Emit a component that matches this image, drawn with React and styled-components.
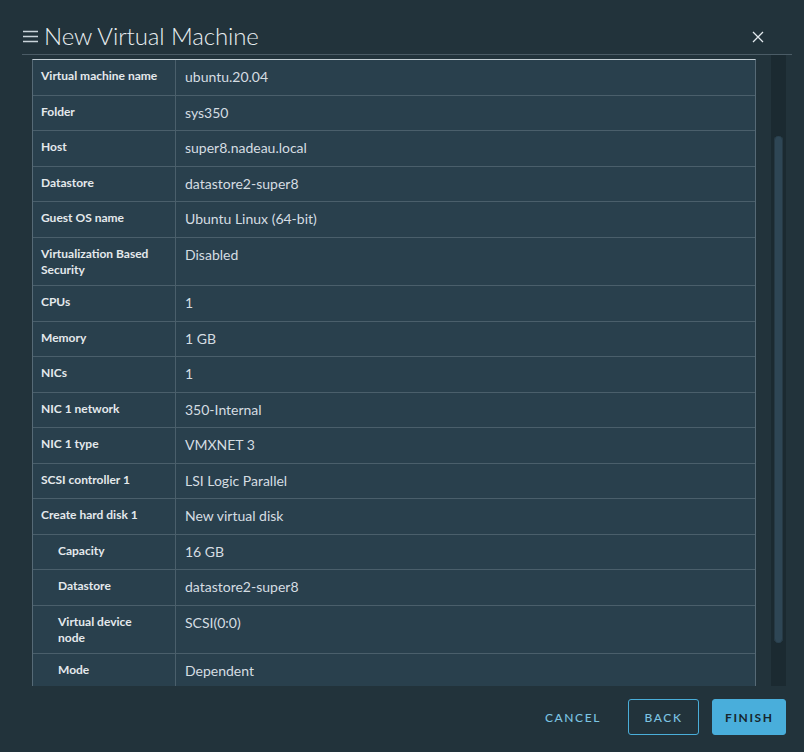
import React from "react";
import styled, { createGlobalStyle } from "styled-components";

const rows = [
    { label: "Virtual machine name", value: "ubuntu.20.04" },
    { label: "Folder", value: "sys350" },
    { label: "Host", value: "super8.nadeau.local" },
    { label: "Datastore", value: "datastore2-super8" },
    { label: "Guest OS name", value: "Ubuntu Linux (64-bit)" },
    { label: "Virtualization Based Security", value: "Disabled" },
    { label: "CPUs", value: "1" },
    { label: "Memory", value: "1 GB" },
    { label: "NICs", value: "1" },
    { label: "NIC 1 network", value: "350-Internal" },
    { label: "NIC 1 type", value: "VMXNET 3" },
    { label: "SCSI controller 1", value: "LSI Logic Parallel" },
    { label: "Create hard disk 1", value: "New virtual disk" },
    { label: "Capacity", value: "16 GB", sub: true },
    { label: "Datastore", value: "datastore2-super8", sub: true },
    { label: "Virtual device node", value: "SCSI(0:0)", sub: true },
    { label: "Mode", value: "Dependent", sub: true },
];

const App = () => {
    return (
        <>
            <GlobalStyle />
            <Dialog>
                <Header>
                    <MenuIcon width="15" height="13" viewBox="0 0 15 13">
                        <path d="M0 1.5h15M0 6.5h15M0 11.5h15" stroke="#c9d4da" strokeWidth="1.4" />
                    </MenuIcon>
                    <Title>New Virtual Machine</Title>
                    <CloseButton>
                        <svg width="12" height="12" viewBox="0 0 12 12">
                            <path d="M1 1l10 10M11 1L1 11" stroke="#e3eaee" strokeWidth="1.3" />
                        </svg>
                    </CloseButton>
                </Header>
                <Divider />
                <Body>
                    <ScrollArea>
                        <Table>
                            {rows.map((row, index) => (
                                <Row key={`row-${index}`}>
                                    <Label sub={row.sub}>{row.label}</Label>
                                    <Value>{row.value}</Value>
                                </Row>
                            ))}
                        </Table>
                    </ScrollArea>
                    <Track>
                        <Thumb />
                    </Track>
                </Body>
                <Footer>
                    <TextButton>Cancel</TextButton>
                    <OutlineButton>Back</OutlineButton>
                    <PrimaryButton>Finish</PrimaryButton>
                </Footer>
            </Dialog>
        </>
    );
};

export default App;

const GlobalStyle = createGlobalStyle`
    html, body {
        margin: 0;
        padding: 0;
        background: #22333b;
    }
    * {
        box-sizing: border-box;
    }
`;

const Dialog = styled.div`
    width: 804px;
    height: 752px;
    background: #22333b;
    font-family: "Lato", "Noto Sans", sans-serif;
    display: flex;
    flex-direction: column;
    overflow: hidden;
`;

const Header = styled.div`
    height: 54px;
    display: flex;
    align-items: center;
    padding: 17px 40px 0 23px;
`;

const MenuIcon = styled.svg`
    margin-right: 6px;
    margin-top: 1px;
`;

const Title = styled.h1`
    margin: 0;
    flex: 1;
    font-size: 24px;
    font-weight: 300;
    color: #e8eef1;
    letter-spacing: -0.1px;
`;

const CloseButton = styled.div`
    display: flex;
    align-items: center;
    margin-top: 2px;
`;

const Divider = styled.div`
    height: 1px;
    margin: 0 12px 0 22px;
    background: #4b5c66;
`;

const Body = styled.div`
    height: 631px;
    display: flex;
    padding: 0 18px 0 32px;
`;

const ScrollArea = styled.div`
    width: 724px;
    height: 100%;
    overflow: hidden;
    padding-top: 4px;
`;

const Table = styled.div`
    background: #29404d;
    border-top: 1.5px solid #c4cfd5;
    border-left: 1px solid #566a76;
    border-right: 1px solid #566a76;
`;

const Row = styled.div`
    display: grid;
    grid-template-columns: 143px 1fr;
    border-bottom: 1px solid #4a5f6b;
`;

const Label = styled.div`
    padding: 8px 16px 7.5px ${(p) => (p.sub ? "25px" : "8px")};
    border-right: 1px solid #4a5f6b;
    font-size: 12px;
    line-height: 16px;
    font-weight: 700;
    color: #e4e9ec;
`;

const Value = styled.div`
    padding: 7px 10px 7.5px 9px;
    font-size: 14px;
    line-height: 20px;
    color: #d5dde2;
`;

const Track = styled.div`
    width: 15px;
    margin-left: 15px;
    background: #1b2a31;
    padding: 81px 3px 0 3px;
`;

const Thumb = styled.div`
    height: 507px;
    border-radius: 5px;
    background: #2e4655;
    box-shadow: inset 1px 0 0 #263944, inset -1px 0 0 #263944;
`;

const Footer = styled.div`
    flex: 1;
    display: flex;
    justify-content: flex-end;
    align-items: flex-start;
    padding: 13px 18px 0 0;
    gap: 13px;
`;

const BaseButton = styled.button`
    height: 36px;
    padding: 0 12px;
    font-family: "Lato", "Noto Sans", sans-serif;
    font-size: 12px;
    font-weight: 500;
    letter-spacing: 1.6px;
    text-transform: uppercase;
    border-radius: 3px;
    cursor: pointer;
`;

const TextButton = styled(BaseButton)`
    background: transparent;
    border: none;
    color: #7cc4e2;
    padding: 0 14px;
`;

const OutlineButton = styled(BaseButton)`
    width: 71px;
    background: transparent;
    border: 1px solid #4aaed9;
    color: #7cc4e2;
`;

const PrimaryButton = styled(BaseButton)`
    width: 74px;
    background: #49aedb;
    border: 1px solid #49aedb;
    color: #17262e;
    font-weight: 700;
`;
